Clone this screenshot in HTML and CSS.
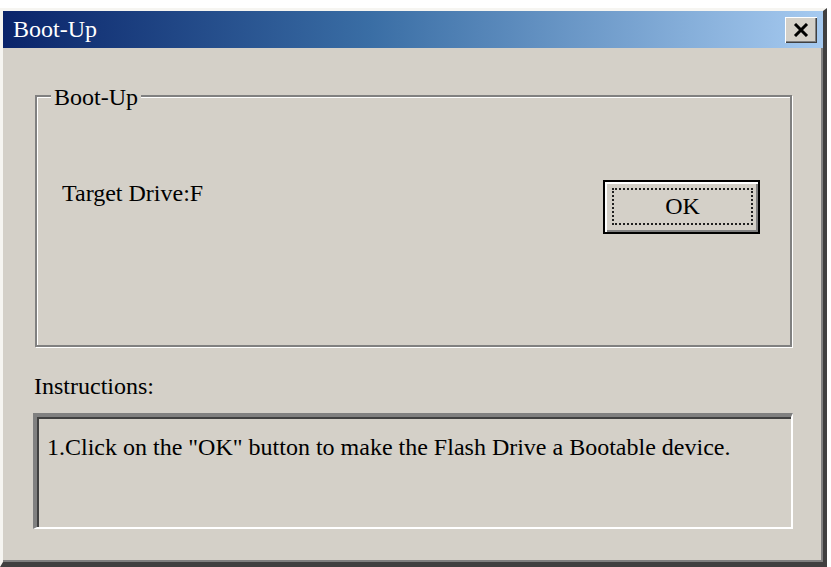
FILE: index.html
```html
<!DOCTYPE html>
<html>
<head>
<meta charset="utf-8">
<title>Boot-Up</title>
<link rel="stylesheet" href="styles.css">
</head>
<body>
<div class="window">
  <div class="titlebar">
    <span class="title">Boot-Up</span>
    <button class="close" aria-label="Close">
      <svg width="16" height="14" viewBox="0 0 16 14"><path d="M2 1 L14 13 M14 1 L2 13" stroke="#000" stroke-width="3" fill="none"/></svg>
    </button>
  </div>
  <div class="client">
    <div class="group">
      <span class="group-label">Boot-Up</span>
      <div class="group-body">
        <span class="target">Target Drive:F</span>
        <button class="ok"><span class="focus">OK</span></button>
      </div>
    </div>
    <div class="instr-label">Instructions:</div>
    <div class="instr-box">1.Click on the "OK" button to make the Flash Drive a Bootable device.</div>
  </div>
</div>
</body>
</html>
```

FILE: styles.css
```css
html, body {
  margin: 0;
  background: #ffffff;
}
body {
  padding-top: 8px;
  font-family: "Liberation Serif", "Times New Roman", serif;
  font-size: 24px;
  color: #000;
}
.window {
  box-sizing: border-box;
  width: 827px;
  height: 559px;
  background: #d4d0c8;
  border-left: 3px solid #f6f5f1;
  border-top: 3px solid #f6f5f1;
  border-right: 4px solid #404040;
  border-bottom: 5px solid #404040;
  box-shadow: inset -2px -2px 0 #808080;
}
.titlebar {
  height: 37px;
  display: flex;
  align-items: center;
  padding: 0 6px 0 10px;
  background: linear-gradient(to right, #0a246a 0%, #3a6ea5 45%, #a6caf0 100%);
}
.title {
  color: #ffffff;
  font-size: 24px;
  line-height: 27px;
}
.close {
  margin-left: auto;
  width: 32px;
  height: 26px;
  padding: 0;
  border: none;
  background: #d4d0c8;
  box-shadow: inset 1px 1px 0 #ffffff, inset -1px -1px 0 #404040, inset -2px -2px 0 #808080;
  display: flex;
  align-items: center;
  justify-content: center;
}
.client {
  padding: 47px 31px 0 32px;
}
.group {
  position: relative;
  box-sizing: border-box;
  height: 252px;
  border: 2px solid #808080;
  box-shadow: inset 1px 1px 0 #ffffff, 1px 1px 0 #ffffff;
}
.group-label {
  position: absolute;
  top: -13px;
  left: 14px;
  padding: 0 3px;
  line-height: 27px;
  background: #d4d0c8;
}
.group-body {
  display: flex;
  justify-content: space-between;
  align-items: flex-start;
  padding: 83px 30px 0 25px;
}
.target {
  line-height: 27px;
}
.ok {
  box-sizing: border-box;
  width: 157px;
  height: 54px;
  padding: 6px 5px 7px 7px;
  background: #d4d0c8;
  border: 2px solid #000;
  box-shadow: inset 2px 2px 0 #ffffff, inset -2px -2px 0 #808080;
  font-family: "Liberation Serif", "Times New Roman", serif;
  font-size: 24px;
  color: #000;
  display: flex;
}
.focus {
  flex: 1;
  display: flex;
  align-items: center;
  justify-content: center;
  border: 2px dotted #202020;
  line-height: 27px;
}
.instr-label {
  margin-top: 26px;
  margin-left: -1px;
  line-height: 27px;
}
.instr-box {
  box-sizing: border-box;
  margin-top: 13px;
  margin-left: -2px;
  width: 760px;
  height: 116px;
  padding: 17px 10px 0 10px;
  line-height: 27px;
  border-top: 4px solid #808080;
  border-left: 4px solid #808080;
  border-right: 2px solid #ffffff;
  border-bottom: 2px solid #ffffff;
  box-shadow: inset 2px 2px 0 #404040;
}
```
